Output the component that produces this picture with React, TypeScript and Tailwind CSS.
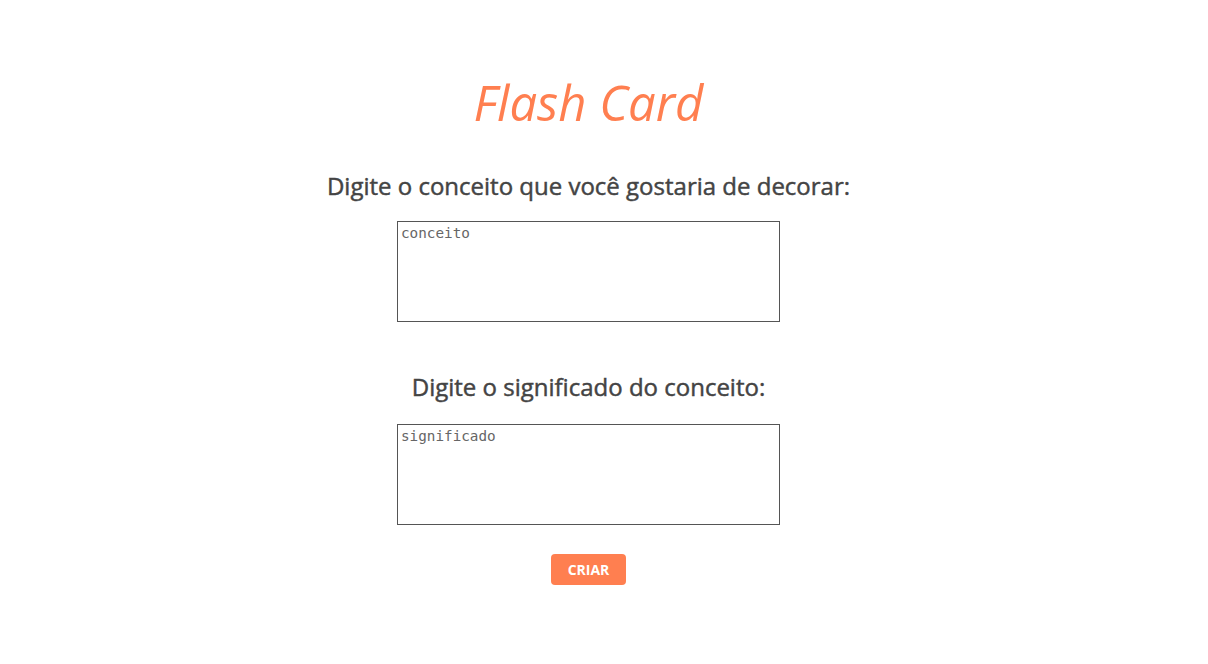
import { useState } from "react";

export default function App() {
  const [concept, setConcept] = useState("");
  const [meaning, setMeaning] = useState("");

  return (
    <div className="min-h-[664px] w-[1177px] bg-white font-['Open_Sans',sans-serif]">
      <div className="flex flex-col items-center pt-[70px]">
        <h1 className="text-[49px] italic leading-[64px] text-[#ff7f50]">Flash Card</h1>

        <form className="mt-[36px] flex flex-col items-center" onSubmit={(e) => e.preventDefault()}>
          <label
            className="text-[24px] leading-[32px] text-[#444] [-webkit-text-stroke:0.45px_#444]"
            htmlFor="conceito"
          >
            Digite o conceito que você gostaria de decorar:
          </label>
          <textarea
            className="mt-[19px] h-[101px] w-[383px] resize-none border border-[#555] px-[3px] py-[3px] font-['DejaVu_Sans_Mono',monospace] text-[14.3px] leading-[17px] text-[#333] outline-none placeholder:text-[#666]"
            id="conceito"
            onChange={(e) => setConcept(e.target.value)}
            placeholder="conceito"
            value={concept}
          />

          <label
            className="mt-[49px] text-[24px] leading-[32px] text-[#444] [-webkit-text-stroke:0.45px_#444]"
            htmlFor="significado"
          >
            Digite o significado do conceito:
          </label>
          <textarea
            className="mt-[21px] h-[101px] w-[383px] resize-none border border-[#555] px-[3px] py-[3px] font-['DejaVu_Sans_Mono',monospace] text-[14.3px] leading-[17px] text-[#333] outline-none placeholder:text-[#666]"
            id="significado"
            onChange={(e) => setMeaning(e.target.value)}
            placeholder="significado"
            value={meaning}
          />

          <button
            className="mt-[29px] h-[31px] w-[75px] rounded-[4px] bg-[#ff7f50] text-[14px] font-bold text-white"
            type="submit"
          >
            CRIAR
          </button>
        </form>
      </div>
    </div>
  );
}
